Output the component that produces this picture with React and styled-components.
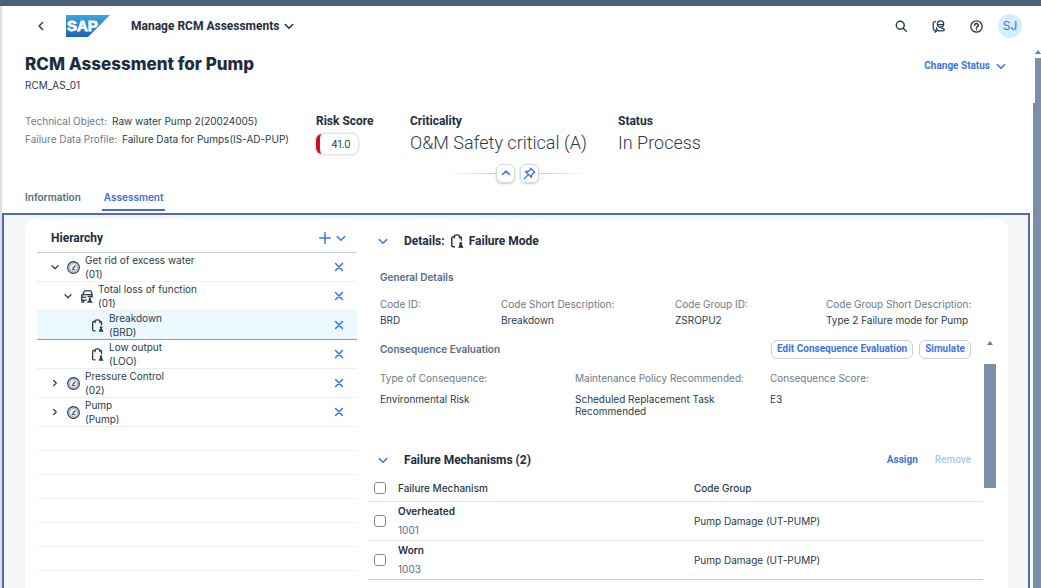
import React, { useState } from 'react';
import styled, { createGlobalStyle, css } from 'styled-components';

const GlobalStyle = createGlobalStyle`
  :root {
    --text: #2b3a4b;
    --heading: #1d2d3e;
    --label: #6d7a88;
    --muted: #556b82;
    --blue: #3b74e8;
    --line: #eceeef;
    --slate: #7c8fa8;
    --fz-xs: 10px;
    --fz-md: 12px;
    --fz-lg: 17px;
    --font-strong: Roboto, 'Liberation Sans', sans-serif;
  }

  * {
    box-sizing: border-box;
  }

  body {
    margin: 0;
    overflow: hidden;
    background: #fff;
    color: var(--text);
    font-family: Inter, 'Liberation Sans', sans-serif;
    font-size: var(--fz-xs);
    line-height: 14px;
  }

  h1, h2, h3, p, ul, dl, dd {
    margin: 0;
    padding: 0;
  }

  ul {
    list-style: none;
  }

  button {
    display: inline-flex;
    align-items: center;
    justify-content: center;
    padding: 0;
    border: 0;
    background: none;
    color: inherit;
    font: inherit;
    cursor: pointer;
  }

  svg {
    display: block;
    flex: none;
  }
`;

const strongText = css`
  color: var(--heading);
  font-family: var(--font-strong);
  font-size: var(--fz-md);
  font-weight: 700;
`;

const actionText = css`
  color: var(--blue);
  font-family: var(--font-strong);
  font-weight: 700;
`;

const StyledApp = styled.div`
  display: flex;
  flex-direction: column;
  height: 100vh;
  overflow: hidden;
  border-top: 6px solid #4b6079;
`;

const StyledShellBar = styled.header`
  display: flex;
  flex: none;
  align-items: center;
  height: 40px;
  padding: 0 19px 0 33px;
  border-left: 2px solid #dcdfe3;
`;

const BackButton = styled.button`
  width: 12px;
  height: 20px;
  margin-right: 19px;
`;

const AppMenu = styled.button`
  ${strongText};
  gap: 5px;
  margin-left: 21px;
`;

const ShellActions = styled.div`
  display: flex;
  align-items: center;
  gap: 25px;
  margin-left: auto;
`;

const Avatar = styled.button`
  width: 24px;
  height: 24px;
  margin-left: -10px;
  border-radius: 50%;
  background: #d1efff;
  color: #3a6fd6;
  font-size: var(--fz-md);
`;

const StyledViewport = styled.div`
  display: flex;
  flex: 1;
  min-height: 0;
`;

const StyledPage = styled.main`
  display: flex;
  flex: 1;
  flex-direction: column;
  min-width: 0;
  border-left: 2px solid #dcdfe3;
`;

const StyledPageScroll = styled.div`
  display: flex;
  flex: none;
  flex-direction: column;
  align-items: flex-end;
  width: 8px;
  padding-top: 4px;
`;

const ScrollTop = styled.div`
  flex: none;
  width: 6px;
  height: 45px;
  margin-top: 4px;
  background: var(--slate);
`;

const ScrollRest = styled.div`
  flex: 1;
  width: 8px;
  background: var(--slate);
`;

const TitleRow = styled.div`
  display: flex;
  align-items: flex-start;
  justify-content: space-between;
  padding: 7px 27px 0 23px;
`;

const Title = styled.h1`
  color: var(--heading);
  font-size: var(--fz-lg);
  font-weight: 800;
  line-height: 22px;
`;

const Subtitle = styled.p`
  padding-top: 3px;
`;

const StatusButton = styled.button`
  ${actionText};
  gap: 6px;
  padding-top: 6px;
`;

const StyledFacets = styled.div`
  display: grid;
  grid-template-columns: 291fr 94fr 208fr 390fr;
  padding: 20px 25px 0 23px;
`;

const ObjectData = styled.dl`
  div {
    display: flex;
    gap: 5px;
    line-height: 18px;
  }

  dt {
    color: var(--label);
  }
`;

const Facet = styled.div`
  h2 {
    ${strongText};
    line-height: 18px;
  }

  p {
    font-family: var(--font-strong);
    font-size: 18px;
    font-weight: 300;
    line-height: 26px;
  }
`;

const RiskBadge = styled.span`
  display: inline-flex;
  align-items: center;
  justify-content: center;
  width: 42px;
  height: 20px;
  margin-top: 4px;
  padding-left: 4px;
  border-left: 4px solid #c8142f;
  border-radius: 6px;
  box-shadow: 0 0 3px rgba(85, 107, 130, 0.5);
`;

const HeaderControls = styled.div`
  display: flex;
  align-items: center;
  align-self: center;
  gap: 5px;
  height: 20px;
  margin-top: 7px;

  &:before,
  &:after {
    content: '';
    width: 50px;
    height: 1px;
    margin-right: -5px;
    background: linear-gradient(to left, #c5ccd3, #fff);
  }

  &:after {
    margin: 0 0 0 -5px;
    background: linear-gradient(to right, #c5ccd3, #fff);
  }
`;

const HeaderButton = styled.button`
  width: 19px;
  height: 19px;
  border: 1px solid #d3d9df;
  border-radius: 6px;
  box-shadow: 0 1px 2px rgba(85, 107, 130, 0.35);
  color: var(--blue);
`;

const StyledTabs = styled.nav`
  display: flex;
  gap: 19px;
  padding: 4px 21px 0;
`;

const Tab = styled.button`
  height: 24px;
  padding: 0 2px 3px;
  border-bottom: 2px solid ${({ $active }) => ($active ? '#3f6fd0' : 'transparent')};
  color: ${({ $active }) => ($active ? '#3b6fdc' : '#556b82')};
  font-weight: 600;
`;

const StyledContent = styled.div`
  flex: 1;
  min-height: 0;
  margin: 2px 3px 0 0;
  padding: 4px 20px 0 21px;
  overflow: hidden;
  border: 2px solid #5468b4;
  border-bottom: 0;
  background: #f4f6f7;
`;

const StyledPanel = styled.div`
  display: flex;
  gap: 11px;
  height: 100%;
  padding: 0 12px;
  border-radius: 10px 10px 0 0;
  background: #fff;
`;

const StyledHierarchy = styled.section`
  flex: 320 1 0;
  min-width: 0;
`;

const HierarchyHeader = styled.div`
  display: flex;
  align-items: center;
  gap: 5px;
  height: 34px;
  padding: 5px 11px 0 14px;
  border-bottom: 1px solid #c3cbd2;
  color: var(--blue);

  h2 {
    ${strongText};
    flex: 1;
  }
`;

const TreeItem = styled.li`
  display: flex;
  align-items: center;
  height: ${({ $empty }) => ($empty ? '24px' : '29px')};
  padding: 0 12px 0 ${({ $indent }) => $indent}px;
  border-bottom: 1px solid var(--line);

  ${({ $selected }) =>
    $selected &&
    css`
      border-bottom-color: #6c9fe8;
      background: #ebf8ff;
    `}
`;

const TreeToggle = styled.button`
  width: 11px;
  height: 20px;
  margin-right: 7px;
`;

const TreeLabel = styled.span`
  flex: 1;
  padding-left: 5px;
`;

const RemoveButton = styled.button`
  width: 12px;
  height: 20px;
  color: var(--blue);
`;

const StyledDetails = styled.section`
  display: flex;
  flex: 628 1 0;
  flex-direction: column;
  min-width: 0;
`;

const SectionHeader = styled.div`
  display: flex;
  align-items: center;
  padding: 0 12px 0 10px;

  h2 {
    ${strongText};
    display: flex;
    align-items: center;
    gap: 5px;
    flex: 1;
    line-height: 16px;
  }
`;

const DetailsHeader = styled(SectionHeader)`
  padding-top: 14px;
`;

const MechanismsHeader = styled(SectionHeader)`
  padding-top: 35px;
`;

const CollapseButton = styled.button`
  width: 10px;
  height: 16px;
  margin-right: 16px;
  color: var(--blue);
`;

const Subheading = styled.h3`
  color: var(--muted);
  font-size: var(--fz-xs);
  font-weight: 600;
`;

const GeneralDetails = styled.div`
  padding: 21px 20px 0 12px;
`;

const Fields = styled.dl`
  display: grid;
  grid-template-columns: ${({ $columns }) => $columns};
  padding-top: ${({ $top }) => $top}px;

  dt {
    padding-bottom: ${({ $gap }) => $gap}px;
    color: var(--label);
  }

  dd {
    max-width: 150px;
    line-height: 12px;
  }
`;

const ScrollArea = styled.div`
  display: flex;
  flex: 1;
  min-height: 0;
  margin-top: 13px;
`;

const ScrollContent = styled.div`
  flex: 1;
  min-width: 0;
`;

const InnerScroll = styled.div`
  display: flex;
  flex: none;
  flex-direction: column;
  align-items: center;
  width: 12px;
  margin-left: 1px;
  padding-top: 2px;
`;

const InnerThumb = styled.div`
  width: 12px;
  height: 124px;
  margin-top: 19px;
  background: var(--slate);
`;

const Consequence = styled.div`
  padding: 0 12px;
`;

const ConsequenceHeader = styled.div`
  display: flex;
  align-items: center;
  gap: 6px;
  height: 20px;

  h3 {
    flex: 1;
  }
`;

const OutlineButton = styled.button`
  ${actionText};
  height: 19px;
  padding: 0 5px;
  border: 1px solid #c9d0d8;
  border-radius: 6px;
`;

const LinkButton = styled.button`
  ${actionText};
  margin-left: 17px;

  &:disabled {
    color: #a9c6f3;
    font-weight: 500;
    cursor: default;
  }
`;

const MechanismTable = styled.table`
  width: 100%;
  border-collapse: collapse;
  margin-top: 7px;
  table-layout: fixed;

  th,
  td {
    padding: 0;
    border-bottom: 1px solid #e3e6e8;
    text-align: left;
    font-weight: 400;
  }

  thead th {
    height: 26px;
    font-weight: 500;
  }

  tbody td {
    height: 39px;
  }

  tbody tr:last-child td {
    border-bottom-color: #c3cbd2;
  }

  strong,
  span {
    display: block;
    line-height: 19px;
  }

  strong {
    color: var(--heading);
    font-weight: 600;
  }

  span {
    color: var(--muted);
  }
`;

const CheckCol = styled.col`
  width: 30px;
`;

const GroupCol = styled.col`
  width: 47%;
`;

const Checkbox = styled.input`
  display: block;
  width: 12px;
  height: 12px;
  margin: 0 0 0 6px;
  appearance: none;
  border: 1px solid #7f8b98;
  border-radius: 3px;
  background: #fff;

  &:checked {
    background: var(--blue);
  }
`;

const Svg = ({ size = 12, children, ...rest }) => (
  <svg
    width={size}
    height={size}
    viewBox="0 0 16 16"
    fill="none"
    stroke="currentColor"
    strokeWidth="1.6"
    strokeLinecap="round"
    strokeLinejoin="round"
    aria-hidden="true"
    {...rest}>
    {children}
  </svg>
);

const chevrons = {
  down: 'M2 5.500 8 11.500l6-6',
  up: 'M2.500 10.500 8 5l5.500 5.500',
  left: 'M10.500 2.500 5 8l5.500 5.500',
  right: 'M5.500 3l5 5-5 5',
};

const Chevron = ({ dir = 'down', size = 10 }) => (
  <Svg size={size} strokeWidth="2.400">
    <path d={chevrons[dir]} />
  </Svg>
);

const IconPlus = () => (
  <Svg size={12} strokeWidth="2">
    <path d="M8 1v14M1 8h14" />
  </Svg>
);

const IconClose = () => (
  <Svg size={10} strokeWidth="2.500">
    <path d="M2.500 2.500l11 11M13.500 2.500l-11 11" />
  </Svg>
);

const IconSearch = () => (
  <Svg strokeWidth="1.900">
    <circle cx="7" cy="7" r="5.300" />
    <path d="M11 11l4 4" />
  </Svg>
);

const IconAssistant = () => (
  <Svg size={13} strokeWidth="1.600">
    <path d="M4.500 2H3.500a2 2 0 0 0-2 2v6.500a2 2 0 0 0 2 2H4V15l2.500-2" />
    <circle cx="10.500" cy="5" r="3.900" />
    <path d="M7 5.800h7M5.500 9.500c0 3 2.500 4 5 4s5-.2 4.500-1.800-2-1.700-3.500-1.700" />
  </Svg>
);

const IconHelp = () => (
  <Svg size={13} strokeWidth="1.600">
    <circle cx="8" cy="8" r="7" />
    <path d="M5.800 6.500a2.200 2.200 0 1 1 3.300 1.900c-.7.400-1.100.7-1.100 1.400M8 12v.1" strokeWidth="1.900" />
  </Svg>
);

const IconPin = () => (
  <Svg size={13} strokeWidth="1.700">
    <path d="M9.500 1.500l5 5-1.500.5-2.500 2.500v3.500L3 5.500h3.500L9 3zM6 10l-4.500 4.500" />
  </Svg>
);

const IconGauge = () => (
  <Svg size={13} strokeWidth="1.400">
    <circle cx="8" cy="8" r="7.200" fill="#cfd5db" />
    <circle cx="8" cy="8" r="4.900" fill="#eef1f3" stroke="#8d98a4" strokeWidth=".8" />
    <path d="M7.300 9l2.700-3" />
    <path d="M6.500 10.500h3" strokeWidth="1" />
  </Svg>
);

const IconVehicle = () => (
  <Svg size={13} strokeWidth="1.600">
    <path d="M3.500 5.500 5 2.300C5.300 1.600 5.800 1.200 6.500 1.200l6-.2c.7 0 1.200.4 1.400 1L15 5.500M2 6l13-.5v3M2 6v6.500h6M2 9l5-.2M2.500 12.500V15h2v-2.500M10 8h5" />
    <path d="M9 15.500l3.200-4 3 4z" fill="currentColor" strokeWidth=".8" />
    <circle cx="12.200" cy="11" r="1.500" fill="currentColor" stroke="none" />
  </Svg>
);

const IconClipboard = ({ size = 13 }) => (
  <Svg size={size} strokeWidth="1.600">
    <path d="M5 14.500H3.500A1.500 1.500 0 0 1 2 13V4.500A1.500 1.500 0 0 1 3.500 3H5M11 3h.5A1.500 1.500 0 0 1 13 4.500V7M5 4.500V3c0-1.200 1.400-2 3-2s3 .8 3 2v1.500" />
    <path d="M10.200 15.500l1.200-3.500h1.900l1.200 3.500z" fill="currentColor" strokeWidth="1" />
    <circle cx="12.300" cy="10.500" r="1.500" fill="currentColor" stroke="none" />
  </Svg>
);

const ScrollArrow = () => (
  <svg width="6" height="4" viewBox="0 0 6 4" aria-hidden="true">
    <path d="M0 4l3-4 3 4z" fill="#6b7d94" />
  </svg>
);

const SapLogo = () => (
  <svg width="44" height="22" viewBox="0 0 44 22" role="img" aria-label="SAP">
    <defs>
      <linearGradient id="sap" x1="0" y1="0" x2="0" y2="1">
        <stop offset="0" stopColor="#3aa5e4" />
        <stop offset="1" stopColor="#2260b8" />
      </linearGradient>
    </defs>
    <path d="M0 0h44L22 22H0z" fill="url(#sap)" />
    <text
      x="1"
      y="16"
      fill="#fff"
      stroke="#fff"
      strokeWidth="0.8"
      fontFamily="Liberation Sans, sans-serif"
      fontSize="15"
      fontWeight="700">
      SAP
    </text>
  </svg>
);

const icons = { gauge: IconGauge, vehicle: IconVehicle, clipboard: IconClipboard };

const tree = [
  { name: 'Get rid of excess water', code: '01', icon: 'gauge', indent: 12, toggle: 'down' },
  { name: 'Total loss of function', code: '01', icon: 'vehicle', indent: 25, toggle: 'down' },
  { name: 'Breakdown', code: 'BRD', icon: 'clipboard', indent: 54 },
  { name: 'Low output', code: 'LOO', icon: 'clipboard', indent: 54 },
  { name: 'Pressure Control', code: '02', icon: 'gauge', indent: 12, toggle: 'right' },
  { name: 'Pump', code: 'Pump', icon: 'gauge', indent: 12, toggle: 'right' },
];

const general = [
  ['Code ID:', 'BRD'],
  ['Code Short Description:', 'Breakdown'],
  ['Code Group ID:', 'ZSROPU2'],
  ['Code Group Short Description:', 'Type 2 Failure mode for Pump'],
];

const consequence = [
  ['Type of Consequence:', 'Environmental Risk'],
  ['Maintenance Policy Recommended:', 'Scheduled Replacement Task Recommended'],
  ['Consequence Score:', 'E3'],
];

const mechanisms = [
  { name: 'Overheated', id: '1001', group: 'Pump Damage (UT-PUMP)' },
  { name: 'Worn', id: '1003', group: 'Pump Damage (UT-PUMP)' },
];

const FieldList = ({ items, ...rest }) => (
  <Fields {...rest}>
    {items.map(([label, value]) => (
      <div key={label}>
        <dt>{label}</dt>
        <dd>{value}</dd>
      </div>
    ))}
  </Fields>
);

const ShellBar = () => (
  <StyledShellBar>
    <BackButton aria-label="Back">
      <Chevron dir="left" />
    </BackButton>
    <SapLogo />
    <AppMenu>
      Manage RCM Assessments
      <Chevron />
    </AppMenu>
    <ShellActions>
      <button aria-label="Search">
        <IconSearch />
      </button>
      <button aria-label="Assistant">
        <IconAssistant />
      </button>
      <button aria-label="Help">
        <IconHelp />
      </button>
      <Avatar>SJ</Avatar>
    </ShellActions>
  </StyledShellBar>
);

const Hierarchy = () => {
  const [selected, setSelected] = useState('Breakdown');

  return (
    <StyledHierarchy>
      <HierarchyHeader>
        <h2>Hierarchy</h2>
        <button aria-label="Add">
          <IconPlus />
        </button>
        <button aria-label="More">
          <Chevron />
        </button>
      </HierarchyHeader>
      <ul>
        {tree.map(({ name, code, icon, indent, toggle }) => {
          const Icon = icons[icon];
          return (
            <TreeItem
              key={name}
              $indent={indent}
              $selected={selected === name}
              onClick={() => setSelected(name)}>
              {toggle && (
                <TreeToggle aria-label={`Toggle ${name}`}>
                  <Chevron dir={toggle} size={8} />
                </TreeToggle>
              )}
              <Icon />
              <TreeLabel>
                {name}
                <br />({code})
              </TreeLabel>
              <RemoveButton aria-label={`Remove ${name}`}>
                <IconClose />
              </RemoveButton>
            </TreeItem>
          );
        })}
        {[...Array(7)].map((_, i) => (
          <TreeItem key={i} $empty $indent={0} />
        ))}
      </ul>
    </StyledHierarchy>
  );
};

const Mechanisms = () => (
  <>
    <MechanismsHeader>
      <CollapseButton aria-label="Collapse failure mechanisms">
        <Chevron />
      </CollapseButton>
      <h2>Failure Mechanisms (2)</h2>
      <LinkButton>Assign</LinkButton>
      <LinkButton disabled>Remove</LinkButton>
    </MechanismsHeader>
    <MechanismTable>
      <colgroup>
        <CheckCol />
        <col />
        <GroupCol />
      </colgroup>
      <thead>
        <tr>
          <th>
            <Checkbox type="checkbox" aria-label="Select all" />
          </th>
          <th>Failure Mechanism</th>
          <th>Code Group</th>
        </tr>
      </thead>
      <tbody>
        {mechanisms.map(({ name, id, group }) => (
          <tr key={id}>
            <td>
              <Checkbox type="checkbox" aria-label={`Select ${name}`} />
            </td>
            <td>
              <strong>{name}</strong>
              <span>{id}</span>
            </td>
            <td>{group}</td>
          </tr>
        ))}
      </tbody>
    </MechanismTable>
  </>
);

const Details = () => (
  <StyledDetails>
    <DetailsHeader>
      <CollapseButton aria-label="Collapse details">
        <Chevron />
      </CollapseButton>
      <h2>
        Details: <IconClipboard size={14} /> Failure Mode
      </h2>
    </DetailsHeader>
    <GeneralDetails>
      <Subheading>General Details</Subheading>
      <FieldList items={general} $columns="121fr 174fr 151fr 150fr" $top={13} $gap={3} />
    </GeneralDetails>
    <ScrollArea>
      <ScrollContent>
        <Consequence>
          <ConsequenceHeader>
            <Subheading>Consequence Evaluation</Subheading>
            <OutlineButton>Edit Consequence Evaluation</OutlineButton>
            <OutlineButton>Simulate</OutlineButton>
          </ConsequenceHeader>
          <FieldList items={consequence} $columns="195fr 195fr 201fr" $top={12} $gap={8} />
        </Consequence>
        <Mechanisms />
      </ScrollContent>
      <InnerScroll aria-hidden="true">
        <ScrollArrow />
        <InnerThumb />
      </InnerScroll>
    </ScrollArea>
  </StyledDetails>
);

const App = () => {
  const [tab, setTab] = useState('Assessment');

  return (
    <StyledApp>
      <GlobalStyle />
      <ShellBar />
      <StyledViewport>
        <StyledPage>
          <TitleRow>
            <div>
              <Title>RCM Assessment for Pump</Title>
              <Subtitle>RCM_AS_01</Subtitle>
            </div>
            <StatusButton>
              Change Status
              <Chevron />
            </StatusButton>
          </TitleRow>

          <StyledFacets>
            <ObjectData>
              <div>
                <dt>Technical Object:</dt>
                <dd>Raw water Pump 2(20024005)</dd>
              </div>
              <div>
                <dt>Failure Data Profile:</dt>
                <dd>Failure Data for Pumps(IS-AD-PUP)</dd>
              </div>
            </ObjectData>
            <Facet>
              <h2>Risk Score</h2>
              <RiskBadge>41.0</RiskBadge>
            </Facet>
            <Facet>
              <h2>Criticality</h2>
              <p>O&amp;M Safety critical (A)</p>
            </Facet>
            <Facet>
              <h2>Status</h2>
              <p>In Process</p>
            </Facet>
          </StyledFacets>

          <HeaderControls>
            <HeaderButton aria-label="Collapse header">
              <Chevron dir="up" />
            </HeaderButton>
            <HeaderButton aria-label="Pin header">
              <IconPin />
            </HeaderButton>
          </HeaderControls>

          <StyledTabs>
            {['Information', 'Assessment'].map(name => (
              <Tab key={name} $active={tab === name} onClick={() => setTab(name)}>
                {name}
              </Tab>
            ))}
          </StyledTabs>

          <StyledContent>
            <StyledPanel>
              <Hierarchy />
              <Details />
            </StyledPanel>
          </StyledContent>
        </StyledPage>
        <StyledPageScroll aria-hidden="true">
          <ScrollArrow />
          <ScrollTop />
          <ScrollRest />
        </StyledPageScroll>
      </StyledViewport>
    </StyledApp>
  );
};

export default App;
